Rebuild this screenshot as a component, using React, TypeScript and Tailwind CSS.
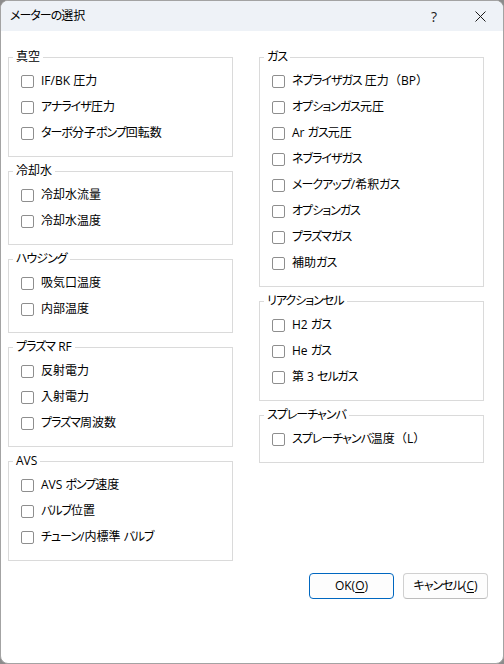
import React from "react";

type Group = { title: string; items: string[] };

const left: Group[] = [
  { title: "真空", items: ["IF/BK 圧力", "アナライザ圧力", "ターボ分子ポンプ回転数"] },
  { title: "冷却水", items: ["冷却水流量", "冷却水温度"] },
  { title: "ハウジング", items: ["吸気口温度", "内部温度"] },
  { title: "プラズマ RF", items: ["反射電力", "入射電力", "プラズマ周波数"] },
  { title: "AVS", items: ["AVS ポンプ速度", "バルブ位置", "チューン/内標準 バルブ"] },
];

const right: Group[] = [
  {
    title: "ガス",
    items: [
      "ネブライザガス 圧力（BP）",
      "オプションガス元圧",
      "Ar ガス元圧",
      "ネブライザガス",
      "メークアップ/希釈ガス",
      "オプションガス",
      "プラズマガス",
      "補助ガス",
    ],
  },
  { title: "リアクションセル", items: ["H2 ガス", "He ガス", "第 3 セルガス"] },
  { title: "スプレーチャンバ", items: ["スプレーチャンバ温度（L）"] },
];

function Label({ text }: { text: string }) {
  const parts = text.split(/([（）]|[\u3040-\u30ff]+)/).filter((p) => p !== "");
  return (
    <>
      {parts.map((p, i) => {
        if (p === "（" || p === "）")
          return (
            <span key={i} className="[font-feature-settings:normal]">
              {p}
            </span>
          );
        if (/^[\u3040-\u30ff]+$/.test(p))
          return (
            <span key={i} className="tracking-[-1px]">
              {p}
            </span>
          );
        return <React.Fragment key={i}>{p}</React.Fragment>;
      })}
    </>
  );
}

function GroupBox({ g }: { g: Group }) {
  return (
    <fieldset className="border border-[#dadada] pl-[12px] pr-[8px] pt-[3px] pb-[10px]">
      <legend className="-ml-[8px] px-[3px] leading-[16px] text-black">
        <Label text={g.title} />
      </legend>
      {g.items.map((it) => (
        <div key={it} className="h-[26px] flex items-center gap-[7px]">
          <span className="w-[13px] h-[13px] border border-[#8e8e8e] rounded-[2px] bg-white shrink-0" />
          <span className="leading-[16px] text-black whitespace-nowrap">
            <Label text={it} />
          </span>
        </div>
      ))}
    </fieldset>
  );
}

export default function App() {
  return (
    <div
      className="w-[504px] h-[664px] bg-[#8c8c8c] text-[12px] [font-feature-settings:'palt']"
      style={{ fontFamily: '"Open Sans", "Noto Sans CJK JP", sans-serif' }}
    >
      <div className="w-full h-full flex flex-col bg-white border border-[#a3a3a3] rounded-[8px] overflow-hidden">
        <div className="h-[30px] shrink-0 bg-[#eef2f7] flex items-center">
          <div className="pl-[9px] flex-1 text-black leading-[16px]">
            <Label text="メーターの選択" />
          </div>
          <div className="w-[46px] h-full flex items-center justify-center text-[14px] text-[#1a1a1a]">?</div>
          <div className="w-[46px] h-full flex items-center justify-center">
            <svg width="11" height="11" viewBox="0 0 11 11" fill="none">
              <path d="M0.5 0.5 L10.5 10.5 M10.5 0.5 L0.5 10.5" stroke="#1a1a1a" strokeWidth="1" />
            </svg>
          </div>
        </div>
        <div className="flex-1 flex flex-col px-[7px] pt-[18px]">
          <div className="flex gap-[26px] items-start">
            <div className="w-[225px] flex flex-col gap-[6px]">
              {left.map((g) => (
                <GroupBox key={g.title} g={g} />
              ))}
            </div>
            <div className="w-[225px] flex flex-col gap-[6px]">
              {right.map((g) => (
                <GroupBox key={g.title} g={g} />
              ))}
            </div>
          </div>
          <div className="mt-auto flex justify-end gap-[9px] pr-[8px] pb-[64px]">
            <button className="w-[85px] h-[26px] rounded-[4px] border border-[#0067c0] bg-[#fdfdfd] text-black leading-[16px]">
              OK(<span className="underline underline-offset-2">O</span>)
            </button>
            <button className="w-[85px] h-[26px] rounded-[4px] border border-[#d0d0d0] border-b-[#bdbdbd] bg-[#fdfdfd] text-black leading-[16px]">
              <Label text="キャンセル" />(<span className="underline underline-offset-2">C</span>)
            </button>
          </div>
        </div>
      </div>
    </div>
  );
}
